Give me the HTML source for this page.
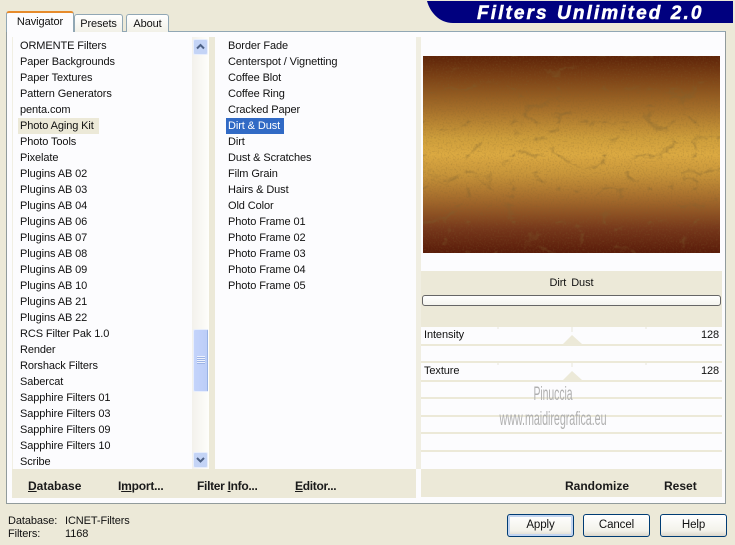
<!DOCTYPE html>
<html><head><meta charset="utf-8">
<style>
html,body{margin:0;padding:0}
body{width:735px;height:545px;overflow:hidden;background:#ece9d8;position:relative;font-family:"Liberation Sans",sans-serif;font-size:11px;letter-spacing:-.1px;color:#111}
div{position:absolute;box-sizing:border-box}
.r{white-space:nowrap;line-height:16px;height:16px}
.b{font-weight:bold;font-size:12px;white-space:nowrap;color:#1a1a1a;letter-spacing:-.2px}
.b u{text-decoration:underline}
.tab{background:linear-gradient(#fff,#f2f1e8);border:1px solid #91a7b4;border-bottom:none;border-radius:3px 3px 0 0;text-align:center;line-height:18px}
.btn{border:1px solid #003c74;border-radius:3px;background:linear-gradient(#fff,#f3f2ea 75%,#dcd8cc);text-align:center;line-height:21px;height:23px;width:67px;top:514px;font-size:11.5px}
.ln{left:421px;width:301px;height:2px;background:#ece9d8}
</style></head><body>

<div style="left:6px;top:31px;width:720px;height:473px;background:#fcfcfe;border:1px solid #919b9c;border-top-color:#91a7b4"></div>

<!-- tabs -->
<div class="tab" style="left:74px;top:14px;width:49px;height:18px">Presets</div>
<div class="tab" style="left:126px;top:14px;width:43px;height:18px">About</div>
<div style="left:6px;top:11px;width:68px;height:21px;background:#fcfcfe;border:1px solid #91a7b4;border-top:2px solid #e68b2c;border-bottom:none;border-radius:3px 3px 0 0;text-align:center;line-height:18px">Navigator</div>

<!-- beige structure -->
<div style="left:12px;top:37px;width:1px;height:461px;background:#f1efe3"></div>
<div style="left:209px;top:37px;width:6px;height:432px;background:#ece9d8"></div>
<div style="left:416px;top:37px;width:5px;height:432px;background:#f0eee2"></div>
<div style="left:12px;top:469px;width:404px;height:29px;background:#ece9d8"></div>
<div style="left:421px;top:469px;width:301px;height:28px;background:#ece9d8"></div>

<!-- left list -->
<div style="left:18px;top:118px;width:81px;height:16px;background:#ece9d8"></div>
<div class="r" style="left:20px;top:38px">ORMENTE Filters</div>
<div class="r" style="left:20px;top:54px">Paper Backgrounds</div>
<div class="r" style="left:20px;top:70px">Paper Textures</div>
<div class="r" style="left:20px;top:86px">Pattern Generators</div>
<div class="r" style="left:20px;top:102px">penta.com</div>
<div class="r" style="left:20px;top:118px">Photo Aging Kit</div>
<div class="r" style="left:20px;top:134px">Photo Tools</div>
<div class="r" style="left:20px;top:150px">Pixelate</div>
<div class="r" style="left:20px;top:166px">Plugins AB 02</div>
<div class="r" style="left:20px;top:182px">Plugins AB 03</div>
<div class="r" style="left:20px;top:198px">Plugins AB 04</div>
<div class="r" style="left:20px;top:214px">Plugins AB 06</div>
<div class="r" style="left:20px;top:230px">Plugins AB 07</div>
<div class="r" style="left:20px;top:246px">Plugins AB 08</div>
<div class="r" style="left:20px;top:262px">Plugins AB 09</div>
<div class="r" style="left:20px;top:278px">Plugins AB 10</div>
<div class="r" style="left:20px;top:294px">Plugins AB 21</div>
<div class="r" style="left:20px;top:310px">Plugins AB 22</div>
<div class="r" style="left:20px;top:326px">RCS Filter Pak 1.0</div>
<div class="r" style="left:20px;top:342px">Render</div>
<div class="r" style="left:20px;top:358px">Rorshack Filters</div>
<div class="r" style="left:20px;top:374px">Sabercat</div>
<div class="r" style="left:20px;top:390px">Sapphire Filters 01</div>
<div class="r" style="left:20px;top:406px">Sapphire Filters 03</div>
<div class="r" style="left:20px;top:422px">Sapphire Filters 09</div>
<div class="r" style="left:20px;top:438px">Sapphire Filters 10</div>
<div class="r" style="left:20px;top:454px">Scribe</div>

<!-- scrollbar -->
<div style="left:192px;top:37px;width:17px;height:432px;background:linear-gradient(90deg,#f3f1ec,#fefefb)"></div>
<div style="left:193px;top:39px;width:15px;height:16px;border-radius:2px;background:#c4d4f6;border:1px solid #e8eefc"><svg width="13" height="14" style="display:block"><path d="M3 8.5L6.5 5L10 8.5" fill="none" stroke="#4d6185" stroke-width="2"/></svg></div>
<div style="left:193px;top:329px;width:15px;height:63px;border-radius:2px;background:linear-gradient(90deg,#c4d4fb,#bccdf8);border:1px solid #e8eefc;border-right-color:#98b1e4"></div>
<div style="left:197px;top:356px;width:8px;height:8px;background:repeating-linear-gradient(#eef2fd 0 1px,#9db4e6 1px 2px)"></div>
<div style="left:193px;top:452px;width:15px;height:16px;border-radius:2px;background:#c4d4f6;border:1px solid #e8eefc"><svg width="13" height="14" style="display:block"><path d="M3 5L6.5 8.5L10 5" fill="none" stroke="#4d6185" stroke-width="2"/></svg></div>

<!-- middle list -->
<div style="left:226px;top:118px;width:58px;height:16px;background:#316ac5"></div>
<div class="r" style="left:228px;top:38px">Border Fade</div>
<div class="r" style="left:228px;top:54px">Centerspot / Vignetting</div>
<div class="r" style="left:228px;top:70px">Coffee Blot</div>
<div class="r" style="left:228px;top:86px">Coffee Ring</div>
<div class="r" style="left:228px;top:102px">Cracked Paper</div>
<div class="r" style="left:228px;top:118px;color:#fff">Dirt &amp; Dust</div>
<div class="r" style="left:228px;top:134px">Dirt</div>
<div class="r" style="left:228px;top:150px">Dust &amp; Scratches</div>
<div class="r" style="left:228px;top:166px">Film Grain</div>
<div class="r" style="left:228px;top:182px">Hairs &amp; Dust</div>
<div class="r" style="left:228px;top:198px">Old Color</div>
<div class="r" style="left:228px;top:214px">Photo Frame 01</div>
<div class="r" style="left:228px;top:230px">Photo Frame 02</div>
<div class="r" style="left:228px;top:246px">Photo Frame 03</div>
<div class="r" style="left:228px;top:262px">Photo Frame 04</div>
<div class="r" style="left:228px;top:278px">Photo Frame 05</div>

<!-- preview -->
<svg style="position:absolute;left:423px;top:56px" width="297" height="197">
<defs>
<linearGradient id="g" x1="0" y1="0" x2="0" y2="1">
<stop offset="0" stop-color="#5e2308"/><stop offset=".12" stop-color="#7f4517"/><stop offset=".28" stop-color="#a8722b"/><stop offset=".42" stop-color="#cf9f3c"/><stop offset=".5" stop-color="#dcaa42"/><stop offset=".6" stop-color="#c8953a"/><stop offset=".74" stop-color="#a0662a"/><stop offset=".88" stop-color="#75361a"/><stop offset="1" stop-color="#591b09"/>
</linearGradient>
<filter id="n" x="0" y="0" width="100%" height="100%">
<feTurbulence type="turbulence" baseFrequency=".022 .03" numOctaves="4" seed="11"/>
<feColorMatrix values="0 0 0 0 .2  0 0 0 0 .12  0 0 0 0 .03  -7 0 0 0 1.1"/>
</filter>
<filter id="f" x="0" y="0" width="100%" height="100%">
<feTurbulence type="fractalNoise" baseFrequency=".6" numOctaves="2" seed="3"/>
<feColorMatrix values="0 0 0 0 .2  0 0 0 0 .12  0 0 0 0 .03  2 0 0 0 -.95"/>
</filter>
</defs>
<rect width="297" height="197" fill="url(#g)"/>
<rect width="297" height="197" filter="url(#n)" opacity=".4"/>
<rect width="297" height="197" filter="url(#f)" opacity=".35"/>
</svg>

<!-- controls -->
<div style="left:421px;top:271px;width:301px;height:56px;background:#ece9d8"></div>
<div style="left:421px;top:276px;width:301px;text-align:center;line-height:14px;word-spacing:2px">Dirt Dust</div>
<div style="left:422px;top:295px;width:299px;height:11px;background:linear-gradient(#fff,#f4f4ee);border:1px solid #666;border-radius:3px"></div>

<div class="ln" style="top:344px"></div>
<div class="ln" style="top:361px"></div>
<div class="ln" style="top:380px"></div>
<div class="ln" style="top:397px"></div>
<div class="ln" style="top:415px"></div>
<div class="ln" style="top:432px"></div>
<div class="ln" style="top:450px"></div>

<svg style="position:absolute;left:421px;top:327px" width="301" height="60">
<path d="M142 17L151 8L161 17Z" fill="#ece9d8"/>
<path d="M142 53L151 44L161 53Z" fill="#ece9d8"/>
<path d="M151 0V5M77 0V2M225 0V2M151 36V40M77 36V38M225 36V38" stroke="#e8e6da" stroke-width="1"/>
</svg>

<div class="r" style="left:424px;top:327px">Intensity</div>
<div class="r" style="left:701px;top:327px">128</div>
<div class="r" style="left:424px;top:363px">Texture</div>
<div class="r" style="left:701px;top:363px">128</div>

<!-- watermark -->
<svg style="position:absolute;left:490px;top:380px" width="130" height="50">
<text x="63" y="20" text-anchor="middle" font-family="Liberation Sans" font-size="19" fill="#b0b0b0" textLength="39" lengthAdjust="spacingAndGlyphs">Pinuccia</text>
<text x="63" y="45" text-anchor="middle" font-family="Liberation Sans" font-size="19" fill="#b0b0b0" textLength="107" lengthAdjust="spacingAndGlyphs">www.maidiregrafica.eu</text>
</svg>

<!-- bottom buttons in panel -->
<div class="b" style="left:28px;top:479px;letter-spacing:0"><u>D</u>atabase</div>
<div class="b" style="left:118px;top:479px">I<u>m</u>port...</div>
<div class="b" style="left:197px;top:479px;letter-spacing:-.3px">Filter <u>I</u>nfo...</div>
<div class="b" style="left:295px;top:479px;letter-spacing:-.3px"><u>E</u>ditor...</div>
<div class="b" style="left:565px;top:479px;letter-spacing:0">Randomize</div>
<div class="b" style="left:664px;top:479px;letter-spacing:0">Reset</div>

<!-- logo -->
<svg style="position:absolute;left:425px;top:0" width="310" height="25">
<path d="M2 1H308V23H28C14 23 5 12 2 1Z" fill="#00007f"/>
<text x="52" y="19" font-family="Liberation Sans" font-size="19" font-weight="bold" font-style="italic" fill="#fff" stroke="#fff" stroke-width=".5" textLength="225" lengthAdjust="spacing" style="letter-spacing:.6px;word-spacing:1px">Filters Unlimited 2.0</text>
</svg>

<!-- status -->
<div class="r" style="left:8px;top:513px">Database:</div>
<div class="r" style="left:65px;top:513px">ICNET-Filters</div>
<div class="r" style="left:8px;top:526px">Filters:</div>
<div class="r" style="left:65px;top:526px">1168</div>

<!-- footer buttons -->
<div class="btn" style="left:507px;box-shadow:inset 0 0 0 2px #c3d5f0">Apply</div>
<div class="btn" style="left:583px">Cancel</div>
<div class="btn" style="left:660px">Help</div>
</body></html>
